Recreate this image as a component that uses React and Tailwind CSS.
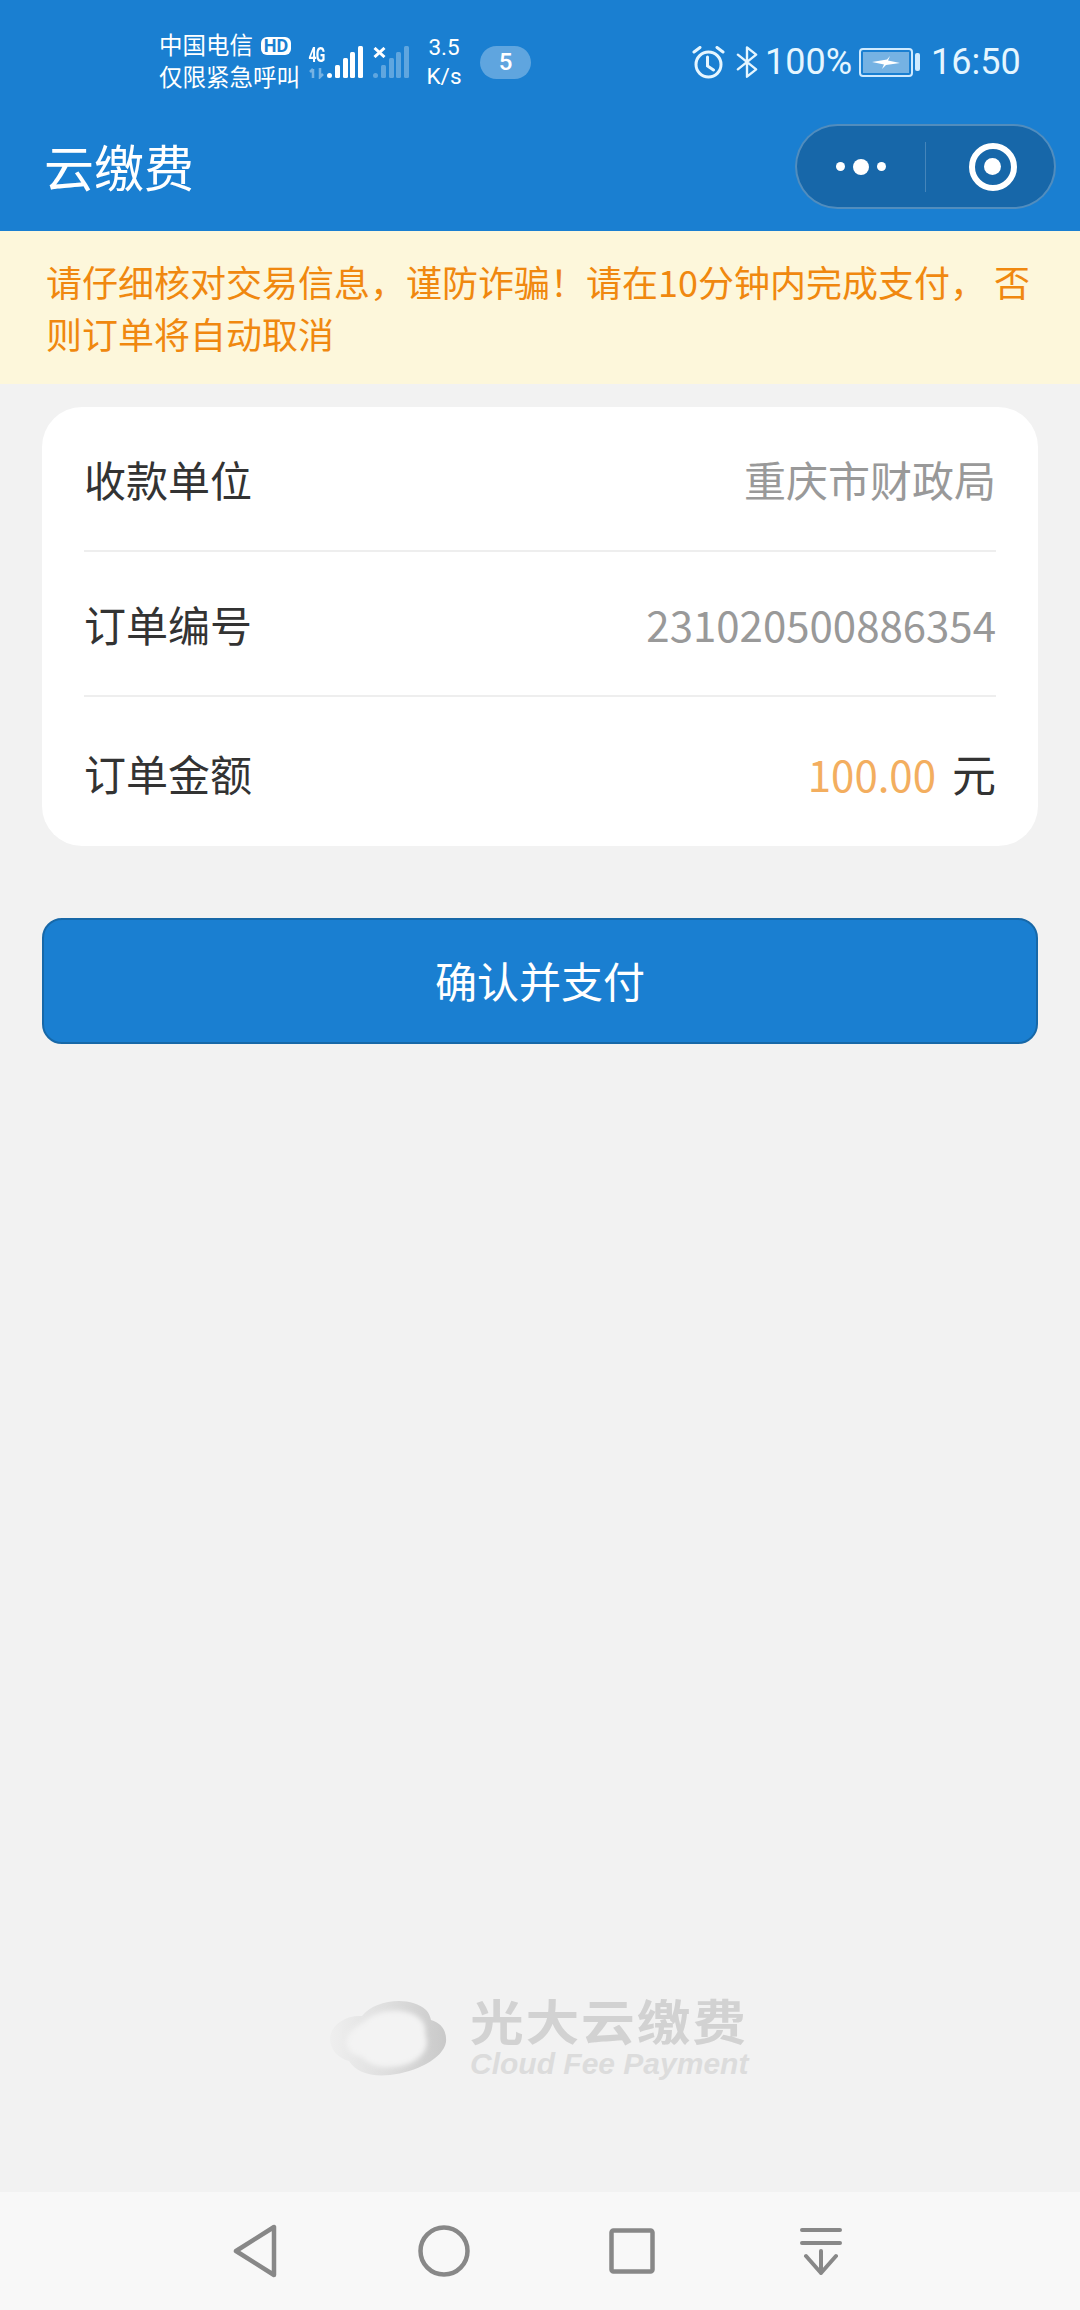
const cjk = "font-['Noto_Sans_CJK_SC',sans-serif]"
const roboto = "font-['Roboto','Noto_Sans_CJK_SC',sans-serif]"

const Signal = () => (
  <svg width="36" height="33" viewBox="0 0 36 33">
    <g fill="#fff">
      <rect x="0" y="27" width="5" height="5" rx="2.5" />
      <rect x="8" y="19" width="5" height="13" rx="1.5" />
      <rect x="16" y="12" width="5" height="20" rx="1.5" />
      <rect x="23" y="6" width="5" height="26" rx="1.5" />
      <rect x="31" y="0" width="5" height="32" rx="1.5" />
    </g>
  </svg>
)

const StatusBar = () => (
  <div className={`h-[124px] flex items-center text-white ${roboto}`}>
    <div className="ml-[159px] w-[143px] flex flex-col text-[23.5px] leading-[32px]">
      <div className="flex items-center whitespace-nowrap">
        中国电信
        <span className="ml-[8px] px-[3px] w-[30px] h-[18px] flex items-center justify-center rounded-[6px] bg-white text-[#1a7fd1] text-[18px] leading-none font-bold">HD</span>
      </div>
      <div className="whitespace-nowrap">仅限紧急呼叫</div>
    </div>
    <div className="ml-[5px] w-[19px] flex flex-col items-center">
      <span className="text-[20px] leading-[20px] font-bold tracking-[-1px] scale-x-[0.7] whitespace-nowrap">4G</span>
      <svg width="18" height="12" viewBox="0 0 18 12" className="opacity-40 mt-[2px]">
        <path d="M5 11V2M2 5l3-3M12 1v9l3-3" stroke="#fff" strokeWidth="2.5" fill="none" />
      </svg>
    </div>
    <div className="ml-[1px] mt-[1px]">
      <Signal />
    </div>
    <div className="ml-[10px] relative mt-[1px] w-[36px] h-[33px]">
      <div className="opacity-30">
        <Signal />
      </div>
      <svg width="13" height="11" viewBox="0 0 13 11" className="absolute left-0 top-[1px]">
        <path d="M1.5 1l10 9M11.5 1l-10 9" stroke="#fff" strokeWidth="3" />
      </svg>
    </div>
    <div className="ml-[15px] w-[40px] flex flex-col items-center text-[22.5px] leading-[29px]">
      <span>3.5</span>
      <span className="whitespace-nowrap">K/s</span>
    </div>
    <div className="ml-[16px] w-[51px] h-[33px] rounded-full bg-white/30 flex items-center justify-center text-[24px] font-medium">5</div>

    <svg width="33" height="33" viewBox="0 0 33 33" className="ml-[161px]" fill="none" stroke="#e5f6ff" strokeWidth="3" strokeLinecap="round">
      <circle cx="16.5" cy="18.5" r="12.5" />
      <path d="M15.5 11v9l6 4M2 6l6-4.5M31 6l-6-4.5" />
    </svg>
    <svg width="22" height="36" viewBox="0 0 24 36" className="ml-[11px]" fill="none" stroke="#e5f6ff" strokeWidth="2.6" strokeLinejoin="round" strokeLinecap="round">
      <path d="M2 10l20 16-10 8V2l10 8L2 26" />
    </svg>
    <span className="ml-[7px] w-[86px] text-[36px] leading-none text-[#e5f6ff] whitespace-nowrap">100%</span>
    <div className="ml-[8px] w-[54px] h-[29px] rounded-[4px] border-2 border-[#cfeaff] p-[2px]">
      <div className="w-full h-full bg-white/40 flex items-center justify-center">
        <svg width="28" height="13" viewBox="0 0 28 13">
          <path d="M0 6l15-2.5L18 0l-2 4.5L28 7l-14 2-4 4 2-4.5z" fill="#fff" />
        </svg>
      </div>
    </div>
    <div className="ml-[2px] w-[5px] h-[18px] rounded-[2px] bg-[#cfeaff]" />
    <span className="ml-[11px] text-[36px] leading-none text-[#e5f6ff] whitespace-nowrap">16:50</span>
  </div>
)

const Capsule = () => (
  <div className="w-[261px] h-[85px] rounded-full bg-[#1767a9] border-2 border-white/25 flex items-center">
    <div className="w-[128px] flex items-center justify-center gap-[8px]">
      <span className="w-[9px] h-[9px] rounded-full bg-white" />
      <span className="w-[16px] h-[16px] rounded-full bg-white" />
      <span className="w-[9px] h-[9px] rounded-full bg-white" />
    </div>
    <div className="w-px h-[50px] bg-white/20" />
    <div className="flex-1 flex items-center justify-center pl-[5px]">
      <div className="w-[48px] h-[48px] rounded-full border-[6px] border-white flex items-center justify-center">
        <span className="w-[17px] h-[17px] rounded-full bg-white" />
      </div>
    </div>
  </div>
)

const Row = ({ label, children, className }) => (
  <div className={`mx-[42px] flex items-center justify-between ${className}`}>
    <span className="text-[#333]">{label}</span>
    {children}
  </div>
)

const NavBar = () => (
  <div className="h-[118px] bg-[#f8f8f8] flex items-center pb-[1px]">
    <svg width="48" height="58" viewBox="0 0 48 58" className="ml-[231px]" fill="none" stroke="#888" strokeWidth="4.5" strokeLinejoin="round">
      <path d="M43 5v48L5 29z" />
    </svg>
    <svg width="52" height="52" viewBox="0 0 52 52" className="ml-[139px]" fill="none" stroke="#888" strokeWidth="4.5">
      <circle cx="26" cy="26" r="23.5" />
    </svg>
    <svg width="46" height="46" viewBox="0 0 46 46" className="ml-[139px]" fill="none" stroke="#888" strokeWidth="4.5" strokeLinejoin="round">
      <rect x="2.5" y="2.5" width="41" height="41" rx="2" />
    </svg>
    <svg width="44" height="48" viewBox="0 0 44 48" className="ml-[144px]" fill="none" stroke="#888" strokeWidth="4" strokeLinecap="round" strokeLinejoin="round">
      <path d="M3 3h38M3 16h38M22 24v22M7 29l15 17 15-17" />
    </svg>
  </div>
)

export default function App() {
  return (
    <div className={`w-[1080px] h-[2310px] bg-[#f2f2f2] flex flex-col overflow-hidden ${cjk}`}>
      <div className="bg-[#1a7fd1] h-[231px]">
        <StatusBar />
        <div className="flex items-center justify-between pl-[44px] pr-[24px] h-[85px]">
          <span className="text-white text-[50px] leading-none mt-[-3px]">云缴费</span>
          <Capsule />
        </div>
      </div>

      <div className="h-[153px] bg-[#fdf7db] px-[46px] pt-[24px] text-[36px] leading-[52px] text-[#f0880f]">
        请仔细核对交易信息，谨防诈骗！请在10分钟内完成支付， 否则订单将自动取消
      </div>

      <div className="mx-[42px] mt-[23px] h-[439px] rounded-[40px] bg-white text-[42px] leading-none flex flex-col">
        <Row label="收款单位" className="h-[145px] border-b-2 border-[#eee]">
          <span className="text-[#999]">重庆市财政局</span>
        </Row>
        <Row label="订单编号" className="h-[145px] border-b-2 border-[#eee]">
          <span className="text-[#999]">231020500886354</span>
        </Row>
        <Row label="订单金额" className="flex-1 pt-[2px]">
          <span>
            <span className="text-[#f3ae5f]">100.00</span>
            <span className="text-[#333] ml-[16px] text-[44px]">元</span>
          </span>
        </Row>
      </div>

      <div className="mx-[42px] mt-[72px] h-[126px] rounded-[20px] bg-[#1a7fd1] border-2 border-[#1768a8] flex items-center justify-center text-white text-[42px] leading-none pb-[2px]">
        确认并支付
      </div>

      <div className="mt-[948px] ml-[330px] h-[90px] flex items-center">
        <svg width="117" height="79" viewBox="0 0 117 79">
          <defs>
            <linearGradient id="cloud" x1="0" y1="0.5" x2="1" y2="0.5">
              <stop offset="0" stopColor="#efefef" />
              <stop offset="0.5" stopColor="#dedede" />
              <stop offset="1" stopColor="#c9c9c9" />
            </linearGradient>
            <filter id="soft" x="-20%" y="-20%" width="140%" height="140%">
              <feGaussianBlur stdDeviation="2.5" />
            </filter>
          </defs>
          <path d="M32 18C44 2 80-3 96 12c3 3 4 6 5 10 11 3 16 12 15 22-3 17-30 30-56 33-20 2-34-3-41-14C8 60 0 52 0 40c1-13 15-23 32-22z" fill="url(#cloud)" />
          <path d="M34 24c12-13 42-15 55-4 6 5 7 11 6 16 5 11 0 23-17 30-18 6-38 4-46-7C22 58 14 50 17 40c3-7 9-12 17-16z" fill="#f3f3f3" filter="url(#soft)" />
        </svg>
        <div className="ml-[23px] mt-[-7px] flex flex-col">
          <span className="text-[#d2d2d2] text-[48px] leading-[60px] font-bold tracking-[1.6px] scale-x-[1.12] origin-left whitespace-nowrap">光大云缴费</span>
          <span className="text-[#dcdcdc] font-['Liberation_Sans',sans-serif] italic font-bold text-[30px] leading-[30px] whitespace-nowrap">Cloud Fee Payment</span>
        </div>
      </div>

      <div className="mt-auto">
        <NavBar />
      </div>
    </div>
  )
}
